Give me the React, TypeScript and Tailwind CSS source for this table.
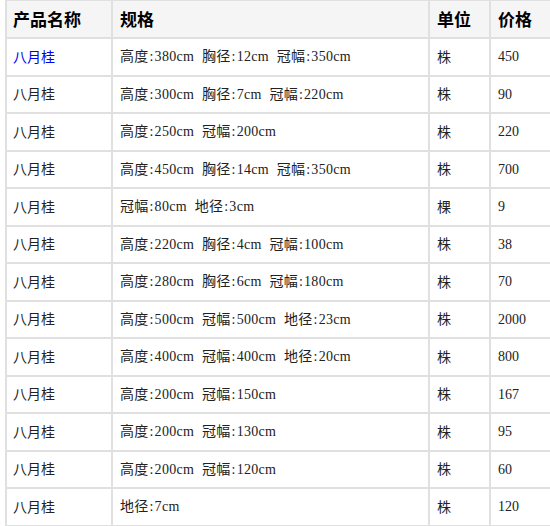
const rows: [string, string, string][] = [
  ["高度:380cm 胸径:12cm 冠幅:350cm", "株", "450"],
  ["高度:300cm 胸径:7cm 冠幅:220cm", "株", "90"],
  ["高度:250cm 冠幅:200cm", "株", "220"],
  ["高度:450cm 胸径:14cm 冠幅:350cm", "株", "700"],
  ["冠幅:80cm 地径:3cm", "棵", "9"],
  ["高度:220cm 胸径:4cm 冠幅:100cm", "株", "38"],
  ["高度:280cm 胸径:6cm 冠幅:180cm", "株", "70"],
  ["高度:500cm 冠幅:500cm 地径:23cm", "株", "2000"],
  ["高度:400cm 冠幅:400cm 地径:20cm", "株", "800"],
  ["高度:200cm 冠幅:150cm", "株", "167"],
  ["高度:200cm 冠幅:130cm", "株", "95"],
  ["高度:200cm 冠幅:120cm", "株", "60"],
  ["地径:7cm", "株", "120"],
];

const cell = "border-2 border-[#e0e0e0] px-[6px] align-middle";

function Spec({ text }: { text: string }) {
  return (
    <>
      {text.split(/(:)/).map((part, i) =>
        part === ":" ? (
          <span className="inline-block w-[6px] text-center" key={i}>
            :
          </span>
        ) : (
          <span key={i}>{part}</span>
        ),
      )}
    </>
  );
}

export default function App() {
  return (
    <div className="w-[550px] h-[526px] overflow-hidden bg-white">
      <table
        className="ml-[5px] mt-[-1px] w-[575px] table-fixed border-collapse text-left text-[#222]"
        style={{ fontFamily: '"Liberation Serif", "Noto Sans CJK SC", serif' }}
      >
        <colgroup>
          <col className="w-[106px]" />
          <col className="w-[317px]" />
          <col className="w-[61px]" />
          <col className="w-[91px]" />
        </colgroup>
        <thead>
          <tr className="h-[38px] bg-[#f5f5f5] text-[17px] font-bold text-black [font-family:'Noto_Sans_CJK_SC',sans-serif]">
            <th className={cell}>产品名称</th>
            <th className={cell + " pl-[7px]"}>规格</th>
            <th className={cell + " pl-[7px]"}>单位</th>
            <th className={cell + " pl-[7px]"}>价格</th>
          </tr>
        </thead>
        <tbody className="text-[14px]">
          {rows.map(([spec, unit, price], i) => (
            <tr className="h-[37.5px]" key={i}>
              <td className={cell + (i === 0 ? " text-[#0000ee]" : "")}>
                <span className="[font-family:'Noto_Sans_CJK_SC',sans-serif]">八月桂</span>
              </td>
              <td className={cell + " pl-[7px] tracking-[0.3px] [word-spacing:4px]"}>
                <Spec text={spec} />
              </td>
              <td className={cell + " pl-[7px]"}>
                <span className="[font-family:'Noto_Sans_CJK_SC',sans-serif]">{unit}</span>
              </td>
              <td className={cell + " pl-[7px]"}>{price}</td>
            </tr>
          ))}
        </tbody>
      </table>
    </div>
  );
}
